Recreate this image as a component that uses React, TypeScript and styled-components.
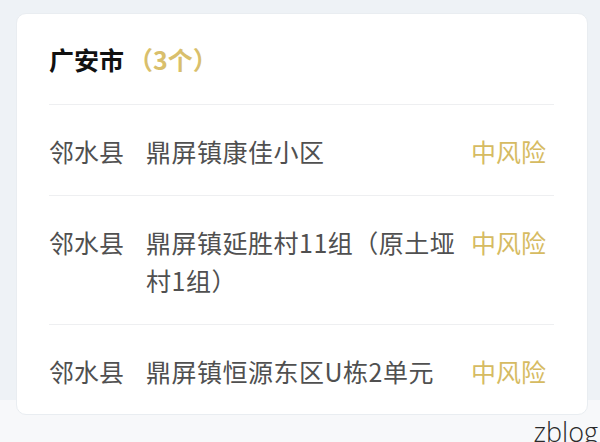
import styled, { createGlobalStyle } from "styled-components";

const GlobalStyle = createGlobalStyle`
  html, body {
    margin: 0;
    padding: 0;
  }
  body {
    font-family: "Noto Sans CJK SC", "Noto Sans", sans-serif;
  }
`;

type Area = {
  county: string;
  address: string;
  level: string;
};

const areas: Area[] = [
  { county: "邻水县", address: "鼎屏镇康佳小区", level: "中风险" },
  { county: "邻水县", address: "鼎屏镇延胜村11组（原土垭村1组）", level: "中风险" },
  { county: "邻水县", address: "鼎屏镇恒源东区U栋2单元", level: "中风险" },
];

export default function App() {
  return (
    <>
      <GlobalStyle />
      <Page>
        <Card>
          <Header>
            <City>广安市</City>
            <Count>（3个）</Count>
          </Header>
          {areas.map((item, i) => (
            <Row key={i}>
              <County>{item.county}</County>
              <Address>{item.address}</Address>
              <Level>{item.level}</Level>
            </Row>
          ))}
        </Card>
        <Footer>
          <Watermark>zblog</Watermark>
        </Footer>
      </Page>
    </>
  );
}

const Page = styled.div`
  width: 600px;
  height: 442px;
  overflow: hidden;
  box-sizing: border-box;
  padding: 13px 12px 0 16px;
  background: linear-gradient(to bottom, #eef2f6 400px, #f7f8fa 400px);
`;

const Card = styled.div`
  box-sizing: border-box;
  height: 402px;
  overflow: hidden;
  padding: 0 33px 0 32px;
  background: #ffffff;
  border: 1px solid #e9edf1;
  border-radius: 10px;
`;

const Header = styled.div`
  display: flex;
  align-items: center;
  height: 91px;
  border-bottom: 1px solid #eeeff1;
  font-size: 25px;
  font-weight: 700;
  line-height: 32px;
  padding-bottom: 1px;
  box-sizing: border-box;
`;

const City = styled.span`
  color: #111111;
`;

const Count = styled.span`
  color: #d9bf6c;
  margin-left: 4px;
`;

const Row = styled.div`
  display: grid;
  grid-template-columns: 75px 1fr 75px;
  column-gap: 22px;
  padding: 27px 8px 25px 0;
  font-size: 25px;
  line-height: 38px;
  border-bottom: 1px solid #eeeff1;

  &:last-child {
    border-bottom: none;
  }
`;

const County = styled.div`
  color: #505050;
`;

const Address = styled.div`
  color: #505050;
  letter-spacing: 0.5px;
  margin-right: -10px;
`;

const Level = styled.div`
  color: #d6bb62;
  text-align: right;
`;

const Footer = styled.div`
  display: flex;
  justify-content: flex-end;
  margin-right: -10px;
`;

const Watermark = styled.span`
  font-family: "Open Sans", "Noto Sans", sans-serif;
  font-weight: 300;
  font-size: 27px;
  line-height: 30px;
  color: #2a2a2a;
  margin-top: 2px;
`;
